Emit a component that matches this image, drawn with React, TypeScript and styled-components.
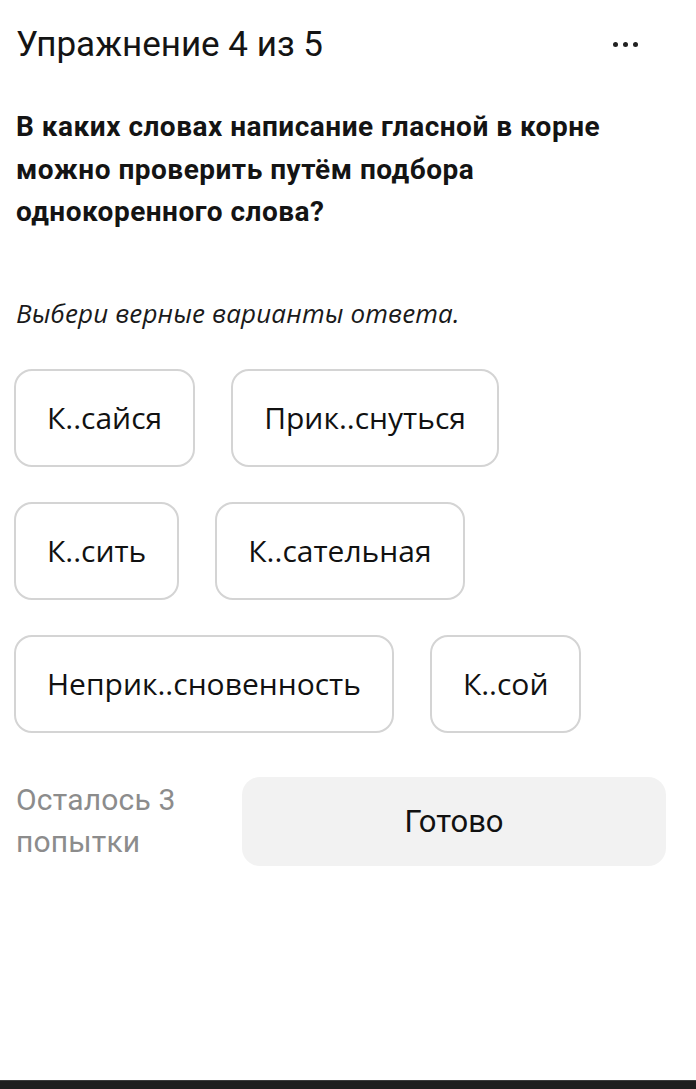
import React from "react";
import styled, { createGlobalStyle } from "styled-components";

const Global = createGlobalStyle`
  html, body { margin: 0; padding: 0; background: #ffffff; }
  body { width: 696px; height: 1089px; overflow: hidden; }
  #root { height: 1089px; }
`;

const Page = styled.div`
  height: 1089px;
  display: flex;
  flex-direction: column;
  background: #fff;
  color: #111;
`;

const Content = styled.div`
  flex: 1;
  padding: 0 30px 0 14px;
  display: flex;
  flex-direction: column;
`;

const Header = styled.div`
  display: flex;
  align-items: center;
  justify-content: space-between;
  height: 88px;
  padding: 0 28px 0 2px;
`;

const Title = styled.h1`
  margin: 0;
  font-family: Roboto, "Noto Sans", sans-serif;
  font-weight: 400;
  font-size: 35px;
  letter-spacing: 0px;
  color: #141414;
`;

const Dots = styled.div`
  display: flex;
  gap: 5px;
  align-items: center;
`;

const Dot = styled.span`
  width: 5px;
  height: 5px;
  border-radius: 50%;
  background: #222;
`;

const Question = styled.p`
  margin: 18px 0 0 2px;
  font-family: Roboto, "Noto Sans", sans-serif;
  font-weight: 700;
  font-size: 28px;
  letter-spacing: 0.5px;
  line-height: 42.5px;
  color: #141414;
`;

const Hint = styled.p`
  margin: 61px 0 0 2px;
  font-family: "Open Sans", "Noto Sans", sans-serif;
  font-style: italic;
  font-size: 26px;
  letter-spacing: 0.15px;
  line-height: 36px;
  color: #1a1a1a;
`;

const Options = styled.div`
  margin-top: 38px;
  display: flex;
  flex-wrap: wrap;
  gap: 35px 36px;
`;

const Chip = styled.button`
  height: 98px;
  box-sizing: border-box;
  padding: 0 31px;
  border: 2px solid #d4d4d4;
  border-radius: 18px;
  background: #fff;
  font-family: "Open Sans", "Noto Sans", sans-serif;
  font-size: 30px;
  color: #111;
  cursor: pointer;
`;

const Footer = styled.div`
  margin-top: 44px;
  display: flex;
  align-items: center;
  gap: 26px;
`;

const Attempts = styled.div`
  width: 200px;
  padding-left: 2px;
  font-family: Roboto, "Noto Sans", sans-serif;
  font-size: 30px;
  letter-spacing: 0.2px;
  line-height: 42px;
  color: #8c8c8c;
`;

const Done = styled.button`
  flex: 1;
  height: 89px;
  border: none;
  border-radius: 18px;
  background: #f2f2f2;
  font-family: Roboto, "Noto Sans", sans-serif;
  font-size: 31px;
  color: #111;
  cursor: pointer;
`;

const BottomBar = styled.div`
  height: 8px;
  background: #1e1e1e;
  border-top: 1px solid #3c3c3c;
`;

const options = [
  "К..сайся",
  "Прик..снуться",
  "К..сить",
  "К..сательная",
  "Неприк..сновенность",
  "К..сой",
];

export default function App() {
  return (
    <>
      <Global />
      <Page>
        <Content>
          <Header>
            <Title>Упражнение 4 из 5</Title>
            <Dots>
              <Dot />
              <Dot />
              <Dot />
            </Dots>
          </Header>
          <Question>
            В каких словах написание гласной в корне
            <br />
            можно проверить путём подбора
            <br />
            однокоренного слова?
          </Question>
          <Hint>Выбери верные варианты ответа.</Hint>
          <Options>
            {options.map((o) => (
              <Chip key={o}>{o}</Chip>
            ))}
          </Options>
          <Footer>
            <Attempts>
              Осталось 3
              <br />
              попытки
            </Attempts>
            <Done>Готово</Done>
          </Footer>
        </Content>
        <BottomBar />
      </Page>
    </>
  );
}
